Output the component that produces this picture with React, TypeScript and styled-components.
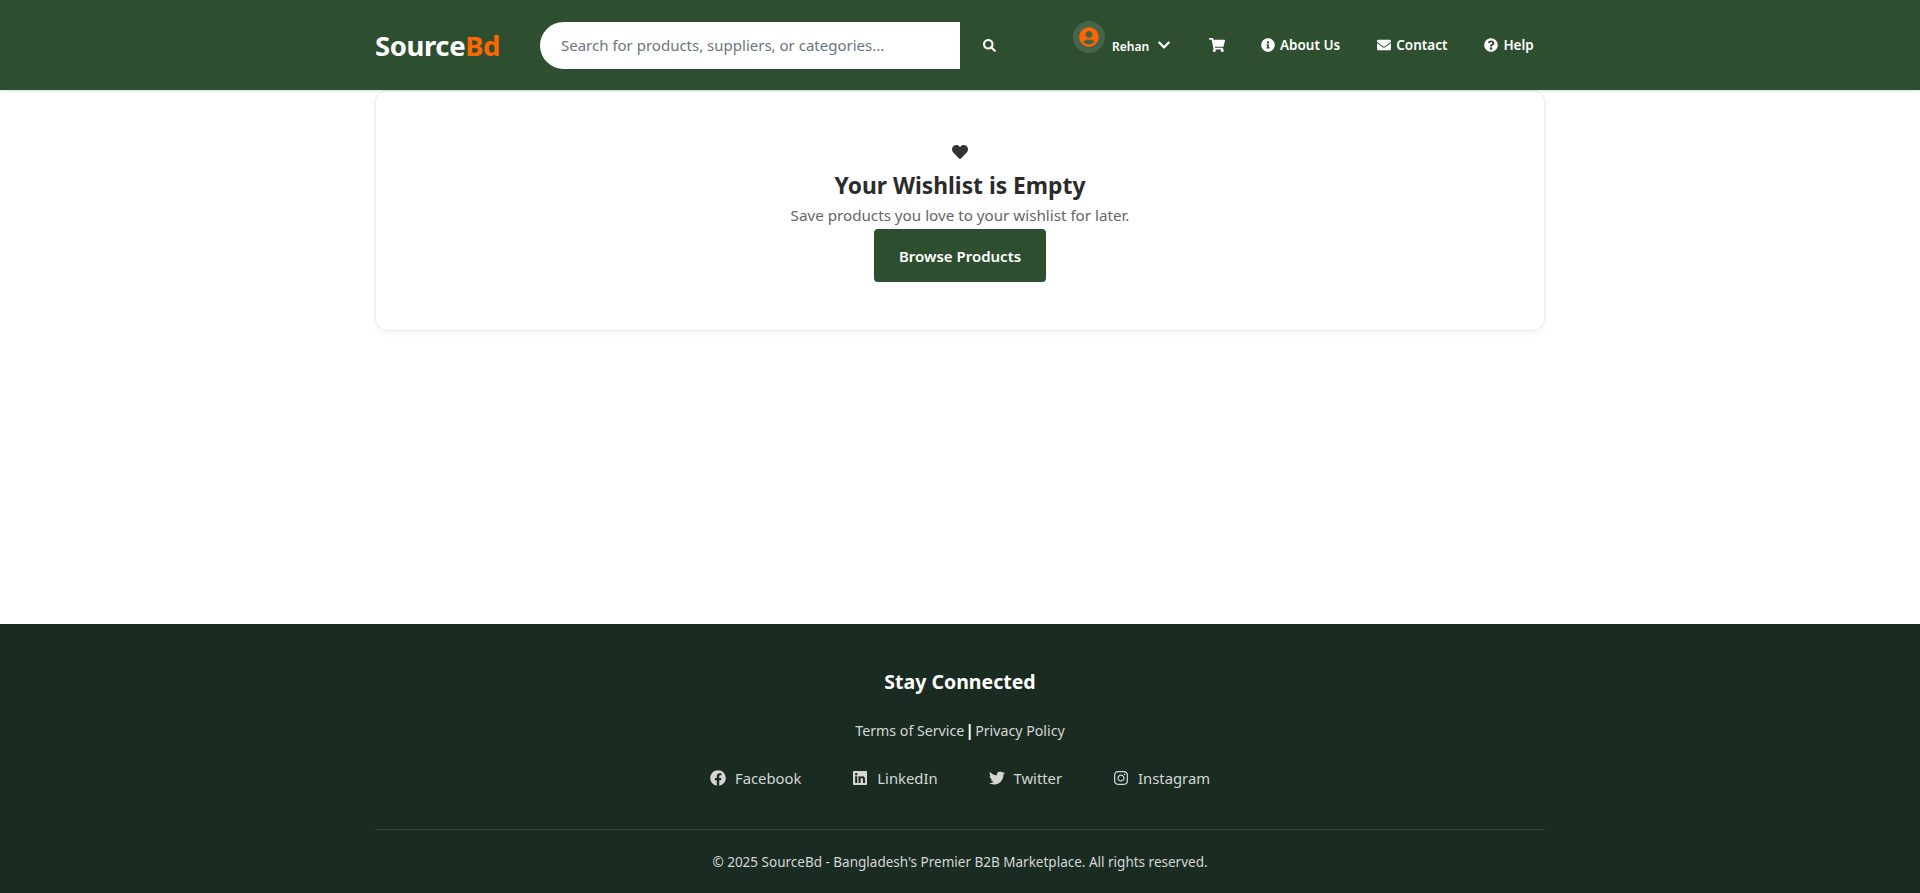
import React from "react";
import styled, { createGlobalStyle } from "styled-components";
import { FaSearch, FaChevronDown, FaUserCircle, FaShoppingCart, FaInfoCircle, FaEnvelope, FaQuestionCircle, FaHeart, FaFacebook, FaLinkedin, FaTwitter, FaInstagram } from "react-icons/fa";

const Global = createGlobalStyle`
  * { box-sizing: border-box; }
  html, body { margin: 0; padding: 0; background: #fff; }
  body { font-family: "Noto Sans", "Open Sans", sans-serif; color: #333; }
`;

const Page = styled.div`
  min-height: 893px;
  display: flex;
  flex-direction: column;
`;

const Header = styled.header`
  height: 90px;
  background: #2d4f30;
  box-shadow: 0 1px 3px rgba(0, 0, 0, 0.15);
  position: relative;
  z-index: 1;
`;

const Container = styled.div`
  width: 1170px;
  margin: 0 auto;
`;

const HeaderRow = styled(Container)`
  height: 90px;
  display: flex;
  align-items: center;
`;

const Logo = styled.div`
  flex: none;
  width: 165px;
  font-size: 27.5px;
  font-weight: 700;
  letter-spacing: -0.4px;
  color: #fff;
  span { color: #ff6600; }
`;

const SearchForm = styled.form`
  display: flex;
  flex: none;
  align-items: center;
  height: 47px;
`;

const SearchInput = styled.div`
  width: 420px;
  height: 47px;
  display: flex;
  align-items: center;
  padding-left: 21px;
  background: #fff;
  border-radius: 24px 0 0 24px;
  font-size: 15px;
  color: #6c757d;
`;

const SearchButton = styled.button`
  width: 58px;
  height: 47px;
  border: 0;
  padding: 0;
  background: transparent;
  color: #fff;
  display: flex;
  align-items: center;
  justify-content: center;
  font-size: 13px;
`;

const Nav = styled.nav`
  flex: none;
  margin-left: 55px;
  display: flex;
  align-items: center;
  height: 47px;
  color: #fff;
  font-size: 13.5px;
  font-weight: 600;
`;

const UserBlock = styled.div`
  display: flex;
  align-items: flex-end;
  width: 136px;
  height: 32px;
  margin-bottom: 16px;
`;

const Avatar = styled.div`
  width: 32px;
  height: 32px;
  border-radius: 50%;
  background: rgba(255, 255, 255, 0.12);
  color: #ff6600;
  display: flex;
  align-items: center;
  justify-content: center;
  font-size: 20px;
`;

const UserName = styled.span`
  font-size: 12px;
  margin-left: 7px;
  line-height: 16px;
  margin-bottom: -2px;
`;

const Chevron = styled.span`
  margin-left: 8px;
  font-size: 14px;
  display: flex;
  margin-bottom: 1.5px;
`;

const CartLink = styled.a`
  width: 52px;
  display: flex;
  font-size: 16px;
`;

const NavLink = styled.a`
  display: flex;
  align-items: center;
  gap: 5px;
  margin-right: 37px;
  white-space: nowrap;
  svg { font-size: 14px; }
  &:last-child { margin-right: 0; }
`;

const Main = styled.main`
  flex: 1;
`;

const Card = styled(Container)`
  height: 241px;
  background: #fff;
  border: 1px solid #e9ebed;
  border-radius: 12px;
  box-shadow: 0 2px 6px rgba(0, 0, 0, 0.05);
  display: flex;
  flex-direction: column;
  align-items: center;
  padding-top: 53px;
`;

const HeartIcon = styled.div`
  display: flex;
  font-size: 16px;
  color: #333;
  height: 16px;
`;

const Title = styled.h2`
  margin: 10px 0 0;
  font-size: 22.8px;
  line-height: 32px;
  font-weight: 700;
  color: #2b2b2b;
`;

const Subtitle = styled.p`
  margin: 1px 0 0;
  font-size: 15.2px;
  line-height: 24px;
  color: #666;
`;

const BrowseButton = styled.button`
  width: 172px;
  height: 53px;
  margin-top: 2px;
  border: 0;
  border-radius: 4px;
  background: #2d4f30;
  color: #fff;
  font-family: inherit;
  font-size: 15px;
  font-weight: 600;
`;

const Footer = styled.footer`
  height: 269px;
  background: #1a2c22;
  color: #d6d6d6;
`;

const FooterInner = styled(Container)`
  display: flex;
  flex-direction: column;
  align-items: center;
  padding-top: 44px;
`;

const FooterTitle = styled.h3`
  margin: 0;
  font-size: 19.5px;
  line-height: 28px;
  font-weight: 700;
  color: #fff;
`;

const LegalRow = styled.div`
  margin-top: 24px;
  font-size: 14.2px;
  line-height: 22px;
  color: #d6d6d6;
  b { color: #fff; font-weight: 700; font-size: 16px; margin: 0 1px; line-height: 20px; }
`;

const SocialRow = styled.div`
  margin-top: 24px;
  display: flex;
  gap: 51px;
  height: 24px;
  align-items: center;
`;

const SocialLink = styled.a`
  display: flex;
  align-items: center;
  gap: 9px;
  font-size: 14.8px;
  color: #d6d6d6;
  svg { height: 16px; width: auto; }
`;

const Divider = styled.hr`
  width: 100%;
  margin: 39px 0 0;
  border: 0;
  border-top: 1px solid #33483a;
`;

const Copyright = styled.p`
  margin: 22px 0 0;
  font-size: 13.5px;
  line-height: 20px;
  color: #d6d6d6;
`;

export default function App() {
  return (
    <Page>
      <Global />
      <Header>
        <HeaderRow>
          <Logo>Source<span>Bd</span></Logo>
          <SearchForm>
            <SearchInput>Search for products, suppliers, or categories...</SearchInput>
            <SearchButton type="button" aria-label="Search"><FaSearch /></SearchButton>
          </SearchForm>
          <Nav>
            <UserBlock>
              <Avatar><FaUserCircle /></Avatar>
              <UserName>Rehan</UserName>
              <Chevron><FaChevronDown /></Chevron>
            </UserBlock>
            <CartLink><FaShoppingCart /></CartLink>
            <NavLink><FaInfoCircle />About Us</NavLink>
            <NavLink><FaEnvelope />Contact</NavLink>
            <NavLink><FaQuestionCircle />Help</NavLink>
          </Nav>
        </HeaderRow>
      </Header>
      <Main>
        <Card>
          <HeartIcon><FaHeart /></HeartIcon>
          <Title>Your Wishlist is Empty</Title>
          <Subtitle>Save products you love to your wishlist for later.</Subtitle>
          <BrowseButton type="button">Browse Products</BrowseButton>
        </Card>
      </Main>
      <Footer>
        <FooterInner>
          <FooterTitle>Stay Connected</FooterTitle>
          <LegalRow>Terms of Service<b>|</b>Privacy Policy</LegalRow>
          <SocialRow>
            <SocialLink><FaFacebook />Facebook</SocialLink>
            <SocialLink><FaLinkedin />LinkedIn</SocialLink>
            <SocialLink><FaTwitter />Twitter</SocialLink>
            <SocialLink><FaInstagram />Instagram</SocialLink>
          </SocialRow>
          <Divider />
          <Copyright>© 2025 SourceBd - Bangladesh's Premier B2B Marketplace. All rights reserved.</Copyright>
        </FooterInner>
      </Footer>
    </Page>
  );
}
